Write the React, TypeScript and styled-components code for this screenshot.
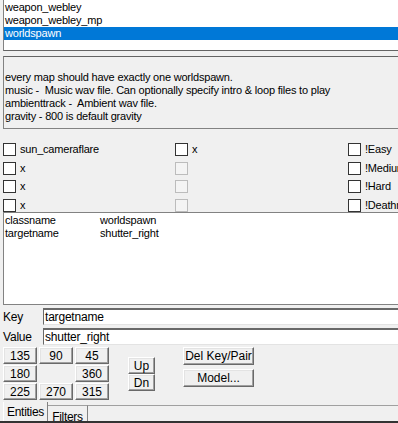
import styled, { createGlobalStyle } from 'styled-components';

const GlobalStyle = createGlobalStyle`
  html, body {
    margin: 0;
    padding: 0;
    background: #f0f0f0;
  }
  * {
    box-sizing: border-box;
  }
`;

const entityNames = ['weapon_webley_wm', 'weapon_webley', 'weapon_webley_mp', 'worldspawn'];

const description = [
  'every map should have exactly one worldspawn.',
  'music -  Music wav file. Can optionally specify intro & loop files to play',
  'ambienttrack -  Ambient wav file.',
  'gravity - 800 is default gravity',
];

type Flag = { label: string; disabled?: boolean };

const flagColumns: Flag[][] = [
  [{ label: 'sun_cameraflare' }, { label: 'x' }, { label: 'x' }, { label: 'x' }],
  [{ label: 'x' }, { label: '', disabled: true }, { label: '', disabled: true }, { label: '', disabled: true }],
  [{ label: '!Easy' }, { label: '!Medium' }, { label: '!Hard' }, { label: '!Deathmatch' }],
];

const pairs = [
  { key: 'classname', value: 'worldspawn' },
  { key: 'targetname', value: 'shutter_right' },
];

const angles = ['135', '90', '45', '180', '', '360', '225', '270', '315'];

export default function App() {
  const rows = [0, 1, 2, 3];

  return (
    <Window>
      <GlobalStyle />
      <Panel>
        <EntityList>
          {entityNames.map((name, i) => (
            <ListRow key={name} $selected={name === 'worldspawn'} $first={i === 0}>
              {name}
            </ListRow>
          ))}
        </EntityList>

        <DescriptionBox>
          {description.map((line) => (
            <DescLine key={line}>{line}</DescLine>
          ))}
        </DescriptionBox>

        <FlagGrid>
          {rows.map((r) =>
            flagColumns.map((col, c) => (
              <FlagItem key={`${r}-${c}`}>
                <CheckBox $disabled={col[r].disabled} />
                <FlagLabel>{col[r].label}</FlagLabel>
              </FlagItem>
            ))
          )}
        </FlagGrid>

        <PairList>
          {pairs.map((p) => (
            <PairRow key={p.key}>
              <PairKey>{p.key}</PairKey>
              <span>{p.value}</span>
            </PairRow>
          ))}
        </PairList>

        <FieldRow>
          <FieldLabel>Key</FieldLabel>
          <FieldInput>targetname</FieldInput>
        </FieldRow>
        <FieldRow>
          <FieldLabel>Value</FieldLabel>
          <FieldInput>shutter_right</FieldInput>
        </FieldRow>

        <ControlsRow>
          <AngleGrid>
            {angles.map((a, i) =>
              a ? <AngleButton key={i}>{a}</AngleButton> : <span key={i} />
            )}
          </AngleGrid>
          <UpDown>
            <SmallButton>Up</SmallButton>
            <SmallButton>Dn</SmallButton>
          </UpDown>
          <ActionColumn>
            <WideButton>Del Key/Pair</WideButton>
            <WideButton>Model...</WideButton>
          </ActionColumn>
        </ControlsRow>

        <TabStrip>
          <Tab $active $width={45}>Entities</Tab>
          <Tab $width={40}>Filters</Tab>
          <TabFill />
        </TabStrip>
      </Panel>
      <BottomEdge />
    </Window>
  );
}

const Window = styled.div`
  width: 398px;
  height: 423px;
  overflow: hidden;
  background: #f0f0f0;
  font-family: 'Liberation Sans', Arial, sans-serif;
  font-size: 11px;
  letter-spacing: -0.2px;
  color: #000;
  display: flex;
  flex-direction: column;
`;

const Panel = styled.div`
  width: 440px;
  padding-left: 3px;
  flex: 1;
  display: flex;
  flex-direction: column;
`;

const EntityList = styled.div`
  height: 51px;
  overflow: hidden;
  background: #fff;
  border-left: 1px solid #828282;
  border-bottom: 1px solid #646464;
`;

const ListRow = styled.div<{ $selected?: boolean; $first?: boolean }>`
  height: 13px;
  line-height: 13px;
  padding-left: 1px;
  margin-top: ${(p) => (p.$first ? '-12px' : '0')};
  white-space: nowrap;
  background: ${(p) => (p.$selected ? '#0078d7' : 'transparent')};
  color: ${(p) => (p.$selected ? '#fff' : '#000')};
`;

const DescriptionBox = styled.div`
  margin-top: 5px;
  height: 73px;
  border: 1px solid #828282;
  border-top-color: #646464;
  padding: 14px 0 0 1px;
`;

const DescLine = styled.div`
  height: 13px;
  line-height: 13px;
  white-space: pre;
`;

const FlagGrid = styled.div`
  display: grid;
  grid-template-columns: 172px 173px 1fr;
  row-gap: 5px;
  padding-top: 14px;
  height: 83px;
`;

const FlagItem = styled.div`
  display: flex;
  align-items: center;
  gap: 4px;
  height: 13px;
  white-space: nowrap;
`;

const CheckBox = styled.span<{ $disabled?: boolean }>`
  width: 13px;
  height: 13px;
  flex: none;
  border: 1px solid;
  border-color: ${(p) => (p.$disabled ? '#bcbcbc' : '#333')};
  background: ${(p) => (p.$disabled ? '#f4f4f4' : '#fff')};
`;

const FlagLabel = styled.span`
  line-height: 13px;
`;

const PairList = styled.div`
  height: 93px;
  background: #fff;
  border: 1px solid #828282;
  padding: 1px 0 0 1px;
`;

const PairRow = styled.div`
  display: flex;
  height: 13px;
  line-height: 13px;
  white-space: nowrap;
`;

const PairKey = styled.span`
  width: 95px;
`;

const FieldRow = styled.div`
  display: flex;
  align-items: center;
  margin-top: 3px;
  &:first-of-type {
    margin-top: 4px;
  }
`;

const FieldLabel = styled.span`
  width: 40px;
  font-size: 12px;
`;

const FieldInput = styled.div`
  flex: 1;
  height: 17px;
  line-height: 14px;
  background: #fff;
  border: 1px solid;
  border-top-width: 2px;
  border-color: #696969 #e3e3e3 #e3e3e3 #696969;
  padding-left: 1px;
  font-size: 12px;
`;

const ControlsRow = styled.div`
  display: flex;
  align-items: flex-start;
  margin-top: 2px;
`;

const AngleGrid = styled.div`
  display: grid;
  grid-template-columns: repeat(3, 34px);
  grid-auto-rows: 17px;
  column-gap: 2px;
  row-gap: 1px;
`;

const ButtonBase = styled.div`
  display: flex;
  align-items: center;
  justify-content: center;
  background: #f0f0f0;
  border: 1px solid;
  border-color: #fff #696969 #696969 #fff;
  box-shadow: inset -1px -1px #a0a0a0, inset 1px 1px #e3e3e3;
  font-size: 12px;
  letter-spacing: 0;
  white-space: nowrap;
`;

const AngleButton = styled(ButtonBase)`
  height: 17px;
`;

const UpDown = styled.div`
  display: flex;
  flex-direction: column;
  margin: 10px 0 0 19px;
`;

const SmallButton = styled(ButtonBase)`
  width: 27px;
  height: 17px;
`;

const ActionColumn = styled.div`
  display: flex;
  flex-direction: column;
  gap: 4px;
  margin-left: 28px;
`;

const WideButton = styled(ButtonBase)`
  width: 71px;
  height: 18px;
`;

const TabStrip = styled.div`
  display: flex;
  align-items: flex-start;
  margin-top: auto;
  height: 19px;
`;

const Tab = styled.div<{ $active?: boolean; $width: number }>`
  width: ${(p) => p.$width}px;
  height: ${(p) => (p.$active ? '19px' : '16px')};
  margin-top: ${(p) => (p.$active ? '0' : '3px')};
  padding-top: ${(p) => (p.$active ? '4px' : '5px')};
  text-align: center;
  border-left: ${(p) => (p.$active ? '1px solid #fff' : 'none')};
  border-right: 1px solid #828282;
  border-top: ${(p) => (p.$active ? 'none' : '1px solid #a0a0a0')};
  font-size: 12px;
  line-height: 12px;
  letter-spacing: -0.3px;
  white-space: nowrap;
`;

const TabFill = styled.div`
  flex: 1;
  margin-top: 3px;
  border-top: 1px solid #a0a0a0;
`;

const BottomEdge = styled.div`
  height: 2px;
  background: #333;
  flex: none;
`;
